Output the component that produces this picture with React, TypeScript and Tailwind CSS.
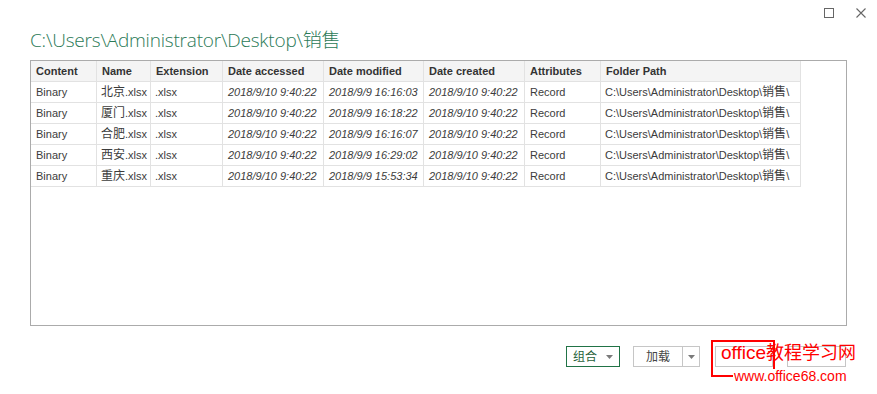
import React from "react";

const cols = [
  { k: "Content", w: "w-[66px]" },
  { k: "Name", w: "w-[54px]" },
  { k: "Extension", w: "w-[72px]" },
  { k: "Date accessed", w: "w-[101px]" },
  { k: "Date modified", w: "w-[100px]" },
  { k: "Date created", w: "w-[101px]" },
  { k: "Attributes", w: "w-[76px]" },
  { k: "Folder Path", w: "w-[200px]" },
];

const rows = [
  ["北京", "2018/9/9 16:16:03"],
  ["厦门", "2018/9/9 16:18:22"],
  ["合肥", "2018/9/9 16:16:07"],
  ["西安", "2018/9/9 16:29:02"],
  ["重庆", "2018/9/9 15:53:34"],
];

const font = { fontFamily: '"Liberation Sans", "Noto Sans CJK SC", sans-serif' };

function Tri() {
  return (
    <svg width="7" height="4" viewBox="0 0 7 4" className="block">
      <path d="M0 0 L7 0 L3.5 4 Z" fill="#7a7a7a" />
    </svg>
  );
}

export default function App() {
  return (
    <div
      className="w-[877px] h-[394px] bg-white overflow-hidden flex flex-col text-[11px] text-[#3c3c3c]"
      style={font}
    >
      {/* window controls */}
      <div className="flex justify-end items-start pt-[8px] pr-[11px] gap-[22px] h-[22px]">
        <div className="w-[10px] h-[10px] border border-[#666]" />
        <svg width="10" height="10" viewBox="0 0 10 10" className="block">
          <path d="M0.5 0.5 L9.5 9.5 M9.5 0.5 L0.5 9.5" stroke="#666" strokeWidth="1.1" />
        </svg>
      </div>

      {/* title */}
      <div
        className="pl-[30px] h-[38px] pt-[6px] text-[19px] leading-[25px] font-light tracking-[-0.2px] text-[#2b7a57] whitespace-nowrap"
        style={{ fontFamily: '"Open Sans", "Noto Sans CJK SC", sans-serif' }}
      >
        C:\Users\Administrator\Desktop\销售
      </div>

      {/* table */}
      <div className="ml-[30px] w-[817px] h-[266px] border border-[#ababab]">
        <div className="flex h-[21px] bg-[#f4f4f4] w-[770px]">
          {cols.map((c) => (
            <div
              key={c.k}
              className={`${c.w} shrink-0 border-r border-b border-[#e2e2e2] pl-[5px] flex items-center font-bold text-[#333] whitespace-nowrap overflow-hidden`}
            >
              {c.k}
            </div>
          ))}
        </div>
        {rows.map((r) => (
          <div key={r[0]} className="flex h-[21px] w-[770px]">
            <div className="w-[66px] shrink-0 border-r border-b border-[#e2e2e2] pl-[5px] flex items-center">Binary</div>
            <div className="w-[54px] shrink-0 border-r border-b border-[#e2e2e2] pl-[4px] flex items-center whitespace-nowrap overflow-hidden">
              <span className="text-[12px]">{r[0]}</span>.xlsx
            </div>
            <div className="w-[72px] shrink-0 border-r border-b border-[#e2e2e2] pl-[4px] flex items-center">.xlsx</div>
            <div className="w-[101px] shrink-0 border-r border-b border-[#e2e2e2] pl-[5px] flex items-center italic whitespace-nowrap">2018/9/10 9:40:22</div>
            <div className="w-[100px] shrink-0 border-r border-b border-[#e2e2e2] pl-[5px] flex items-center italic whitespace-nowrap">{r[1]}</div>
            <div className="w-[101px] shrink-0 border-r border-b border-[#e2e2e2] pl-[5px] flex items-center italic whitespace-nowrap">2018/9/10 9:40:22</div>
            <div className="w-[76px] shrink-0 border-r border-b border-[#e2e2e2] pl-[5px] flex items-center">Record</div>
            <div className="w-[200px] shrink-0 border-r border-b border-[#e2e2e2] pl-[4px] flex items-center whitespace-nowrap overflow-hidden">
              C:\Users\Administrator\Desktop\<span className="text-[12px]">销售</span>\
            </div>
          </div>
        ))}
      </div>

      {/* buttons */}
      <div className="flex mt-[20px] pl-[566px] items-start text-[12px]">
        <div className="w-[54px] h-[21px] border border-[#217346] flex items-center justify-center gap-[9px] text-[#1f5f3a]">
          <span>组合</span>
          <Tri />
        </div>
        <div className="ml-[13px] w-[67px] h-[21px] border border-[#c6c6c6] flex">
          <div className="w-[49px] border-r border-[#c6c6c6] flex items-center justify-center text-[#444]">加载</div>
          <div className="flex-1 flex items-center justify-center">
            <Tri />
          </div>
        </div>
        <div className="relative ml-[13px] w-[60px] h-[21px]">
          <div className="absolute left-[2px] top-0 w-[58px] h-[21px] border border-[#c6c6c6]" />
          <div className="absolute left-[-2px] top-[-6px] w-[64px] h-[37px] border-2 border-[#ff0000]" />
        </div>
        <div className="relative ml-[14px] w-[59px] h-[21px] border border-[#c6c6c6]" />
      </div>
      {/* watermark */}
      <div className="relative h-0">
        <div
          className="absolute left-[721px] top-[-25px] text-[19px] leading-[22px] text-[#ff0000] whitespace-nowrap"
          style={{ fontFamily: '"Liberation Sans", "Noto Sans CJK SC", sans-serif' }}
        >
          office<span className="text-[18px]">教程学习网</span>
        </div>
        <div className="absolute left-[733px] top-[2px] text-[14px] leading-[15px] text-[#ff0000] whitespace-nowrap bg-white px-[1px]">
          www.office68.com
        </div>
      </div>
    </div>
  );
}
